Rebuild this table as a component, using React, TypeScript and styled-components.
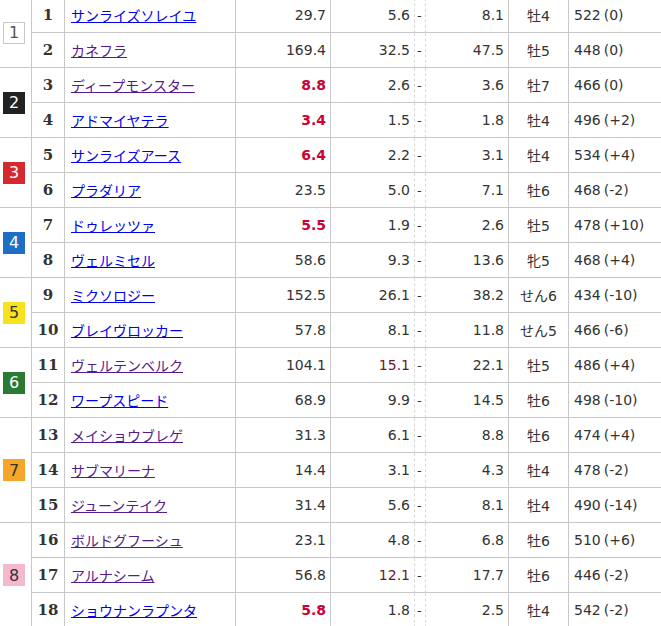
import React from "react";
import styled, { createGlobalStyle, css } from "styled-components";

const Global = createGlobalStyle`
  html, body { margin: 0; padding: 0; background: #fff; overflow: hidden; }
  body { font-family: "DejaVu Sans", "Noto Sans CJK JP", sans-serif; color: #333; }
`;

const LINE = "#c8c8c8";

const Grid = styled.div`
  display: grid;
  grid-template-columns: 32px 33px 171px 95px 84px 11px 83px 60px 93px;
  grid-auto-rows: 35px;
  width: 662px;
  margin-top: -2px;
`;

const Cell = styled.div<{ $align?: "left" | "right" | "center" }>`
  box-sizing: border-box;
  display: flex;
  align-items: center;
  justify-content: ${(p) =>
    p.$align === "right" ? "flex-end" : p.$align === "center" ? "center" : "flex-start"};
  border-right: 1px solid ${LINE};
  border-bottom: 1px solid ${LINE};
  font-size: 14px;
  white-space: nowrap;
  overflow: hidden;
`;

const WakuCell = styled(Cell)<{ $span: number }>`
  grid-column: 1;
  grid-row: span ${(p) => p.$span};
  padding-left: 3px;
`;

const wakuColors: Record<number, [string, string, string]> = {
  1: ["#ffffff", "#555", "#c8c8c8"],
  2: ["#222222", "#ffffff", "#222222"],
  3: ["#d42a2f", "#ffffff", "#d42a2f"],
  4: ["#1c6fc4", "#ffffff", "#1c6fc4"],
  5: ["#f7e21e", "#333", "#f7e21e"],
  6: ["#2b7a34", "#ffffff", "#2b7a34"],
  7: ["#f6a628", "#333", "#f6a628"],
  8: ["#f5b8ce", "#333", "#f5b8ce"],
};

const WakuBox = styled.span<{ $w: number }>`
  box-sizing: border-box;
  width: 22px;
  height: 22px;
  display: flex;
  align-items: center;
  justify-content: center;
  font-family: "DejaVu Sans", sans-serif;
  font-size: 16px;
  background: ${(p) => wakuColors[p.$w][0]};
  color: ${(p) => wakuColors[p.$w][1]};
  border: 1px solid ${(p) => wakuColors[p.$w][2]};
`;

const NumCell = styled(Cell)`
  font-family: "DejaVu Serif", serif;
  font-weight: bold;
  font-size: 15px;
  color: #333;
`;

const NameCell = styled(Cell)`
  padding-left: 6px;
`;

const HorseLink = styled.a<{ $visited?: boolean }>`
  font-family: "Noto Sans CJK JP", sans-serif;
  font-size: 14px;
  color: ${(p) => (p.$visited ? "#551a8b" : "#0000ee")};
  text-decoration: underline;
`;

const OddsCell = styled(Cell)<{ $tone?: "fav" | "dark" }>`
  padding-right: 4px;
  ${(p) =>
    p.$tone === "fav" &&
    css`
      color: #cc0033;
      font-weight: bold;
    `}
  ${(p) =>
    p.$tone === "dark" &&
    css`
      color: #701530;
    `}
`;

const SepCell = styled(Cell)`
  border-right: 1px dashed #d8d8d8;
  padding-left: 2px;
  font-size: 13px;
`;

const MinCell = styled(OddsCell)`
  border-right: 1px dashed #d8d8d8;
`;

const SexCell = styled(Cell)`
  font-family: "DejaVu Sans", "Noto Sans CJK JP", sans-serif;
`;

const WeightCell = styled(Cell)`
  padding-left: 5px;
`;

const Diff = styled.span`
  margin-left: 3px;
`;

type Row = {
  n: number;
  name: string;
  visited: boolean;
  odds: string;
  fav?: boolean;
  min: string;
  minDark?: boolean;
  max: string;
  sex: string;
  w: string;
  d: string;
};

const rows: Row[] = [
  { n: 1, name: "サンライズソレイユ", visited: false, odds: "29.7", min: "5.6", max: "8.1", sex: "牡4", w: "522", d: "(0)" },
  { n: 2, name: "カネフラ", visited: true, odds: "169.4", min: "32.5", max: "47.5", sex: "牡5", w: "448", d: "(0)" },
  { n: 3, name: "ディープモンスター", visited: true, odds: "8.8", fav: true, min: "2.6", max: "3.6", sex: "牡7", w: "466", d: "(0)" },
  { n: 4, name: "アドマイヤテラ", visited: false, odds: "3.4", fav: true, min: "1.5", max: "1.8", sex: "牡4", w: "496", d: "(+2)" },
  { n: 5, name: "サンライズアース", visited: false, odds: "6.4", fav: true, min: "2.2", max: "3.1", sex: "牡4", w: "534", d: "(+4)" },
  { n: 6, name: "プラダリア", visited: false, odds: "23.5", min: "5.0", max: "7.1", sex: "牡6", w: "468", d: "(-2)" },
  { n: 7, name: "ドゥレッツァ", visited: false, odds: "5.5", fav: true, min: "1.9", max: "2.6", sex: "牡5", w: "478", d: "(+10)" },
  { n: 8, name: "ヴェルミセル", visited: false, odds: "58.6", min: "9.3", max: "13.6", sex: "牝5", w: "468", d: "(+4)" },
  { n: 9, name: "ミクソロジー", visited: false, odds: "152.5", min: "26.1", max: "38.2", sex: "せん6", w: "434", d: "(-10)" },
  { n: 10, name: "ブレイヴロッカー", visited: false, odds: "57.8", min: "8.1", max: "11.8", sex: "せん5", w: "466", d: "(-6)" },
  { n: 11, name: "ヴェルテンベルク", visited: true, odds: "104.1", min: "15.1", minDark: true, max: "22.1", sex: "牡5", w: "486", d: "(+4)" },
  { n: 12, name: "ワープスピード", visited: false, odds: "68.9", min: "9.9", max: "14.5", sex: "牡6", w: "498", d: "(-10)" },
  { n: 13, name: "メイショウブレゲ", visited: true, odds: "31.3", min: "6.1", max: "8.8", sex: "牡6", w: "474", d: "(+4)" },
  { n: 14, name: "サブマリーナ", visited: true, odds: "14.4", min: "3.1", max: "4.3", sex: "牡4", w: "478", d: "(-2)" },
  { n: 15, name: "ジューンテイク", visited: true, odds: "31.4", min: "5.6", max: "8.1", sex: "牡4", w: "490", d: "(-14)" },
  { n: 16, name: "ボルドグフーシュ", visited: true, odds: "23.1", min: "4.8", max: "6.8", sex: "牡6", w: "510", d: "(+6)" },
  { n: 17, name: "アルナシーム", visited: true, odds: "56.8", min: "12.1", minDark: true, max: "17.7", sex: "牡6", w: "446", d: "(-2)" },
  { n: 18, name: "ショウナンラプンタ", visited: false, odds: "5.8", fav: true, min: "1.8", max: "2.5", sex: "牡4", w: "542", d: "(-2)" },
];

const wakuOf = (n: number) => (n <= 2 ? 1 : n <= 4 ? 2 : n <= 6 ? 3 : n <= 8 ? 4 : n <= 10 ? 5 : n <= 12 ? 6 : n <= 15 ? 7 : 8);
const wakuStart: Record<number, number> = { 1: 2, 3: 2, 5: 2, 7: 2, 9: 2, 11: 2, 13: 3, 16: 3 };

export default function App() {
  return (
    <>
      <Global />
      <Grid>
        {rows.map((r) => (
          <React.Fragment key={r.n}>
            {wakuStart[r.n] && (
              <WakuCell $span={wakuStart[r.n]}>
                <WakuBox $w={wakuOf(r.n)}>{wakuOf(r.n)}</WakuBox>
              </WakuCell>
            )}
            <NumCell $align="center">{r.n}</NumCell>
            <NameCell>
              <HorseLink href="#" $visited={r.visited}>
                {r.name}
              </HorseLink>
            </NameCell>
            <OddsCell $align="right" $tone={r.fav ? "fav" : undefined}>
              {r.odds}
            </OddsCell>
            <MinCell $align="right" $tone={r.minDark ? "dark" : undefined}>
              {r.min}
            </MinCell>
            <SepCell>-</SepCell>
            <OddsCell $align="right">{r.max}</OddsCell>
            <SexCell $align="center">{r.sex}</SexCell>
            <WeightCell>
              {r.w}
              <Diff>{r.d}</Diff>
            </WeightCell>
          </React.Fragment>
        ))}
      </Grid>
    </>
  );
}
